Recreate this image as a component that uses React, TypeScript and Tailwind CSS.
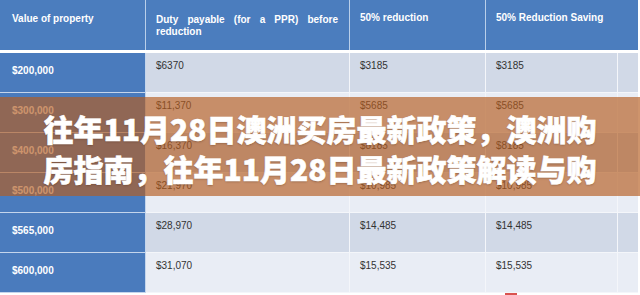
import React from "react";

const rows = [
  { v: "$200,000", a: "$6370", b: "$3185", c: "$3185", dark: true },
  { v: "$300,000", a: "$11,370", b: "$5685", c: "$5685", dark: false },
  { v: "$400,000", a: "$16,370", b: "$8185", c: "$8185", dark: true },
  { v: "$500,000", a: "$21,970", b: "$10,985", c: "$10,985", dark: false },
  { v: "$565,000", a: "$28,970", b: "$14,485", c: "$14,485", dark: true },
  { v: "$600,000", a: "$31,070", b: "$15,535", c: "$15,535", dark: false },
];

export default function App() {
  return (
    <div
      className="relative w-[640px] h-[295px] overflow-hidden bg-white"
      style={{ fontFamily: '"Liberation Sans", Arial, sans-serif' }}
    >
      <div className="w-[638px] flex flex-col">
        {/* header */}
        <div className="flex h-[50px] bg-[#4b7dbe] text-white font-bold text-[10px] leading-[12px]">
          <div className="w-[146px] pl-3 pt-[13px] border-r border-[#b9cfea]">Value of property</div>
          <div className="w-[204px] pl-[10px] pr-[11px] pt-[14px] border-r border-[#b9cfea] text-justify">
            Duty payable (for a PPR) before reduction
          </div>
          <div className="w-[136px] pl-[10px] pt-[12px] border-r border-[#b9cfea]">50% reduction</div>
          <div className="flex-1 pl-[10px] pt-[12px]">50% Reduction Saving</div>
        </div>
        <div className="h-[3px] bg-white" />
        {/* body */}
        {rows.map((r) => (
          <div key={r.v} className="flex h-[40px] text-[10px] leading-[12px]">
            <div className="w-[146px] pl-3 pt-[12px] bg-[#4a7bbd] text-white font-bold border-r border-b border-[#c4d5ec]">
              {r.v}
            </div>
            <div
              className={`w-[204px] pl-[10px] pt-[7px] text-[#333] border-r border-b border-[#f4f6fa] ${
                r.dark ? "bg-[#d1d9e7]" : "bg-[#e9edf5]"
              }`}
            >
              {r.a}
            </div>
            <div
              className={`w-[136px] pl-[10px] pt-[7px] text-[#333] border-r border-b border-[#f4f6fa] ${
                r.dark ? "bg-[#d1d9e7]" : "bg-[#e9edf5]"
              }`}
            >
              {r.b}
            </div>
            <div
              className={`w-[132px] pl-[10px] pt-[7px] text-[#333] border-r border-b border-[#f4f6fa] ${
                r.dark ? "bg-[#d1d9e7]" : "bg-[#e9edf5]"
              }`}
            >
              {r.c}
            </div>
            <div
              className={`flex-1 border-b border-[#f4f6fa] ${r.dark ? "bg-[#d1d9e7]" : "bg-[#e9edf5]"}`}
            />
          </div>
        ))}
        <div className="flex h-[2px]">
          <div className="ml-[505px] w-[12px] h-[2px] bg-[#d9534f]" />
        </div>
      </div>

      {/* title banner overlay */}
      <div className="absolute left-0 top-[97px] w-[640px] h-[99px] bg-[rgba(180,92,32,0.66)] flex flex-col items-center justify-center pt-[3px]">
        <div
          className="text-white font-black text-[30px] leading-[40px] text-center whitespace-nowrap [-webkit-text-stroke:0.6px_white] [text-shadow:0_1px_2px_rgba(60,30,10,0.35)]"
          style={{ fontFamily: '"Noto Sans CJK SC", "Noto Sans", sans-serif' }}
        >
          <div>往年11月28日澳洲买房最新政策，澳洲购</div>
          <div>房指南，往年11月28日最新政策解读与购</div>
        </div>
      </div>
    </div>
  );
}
